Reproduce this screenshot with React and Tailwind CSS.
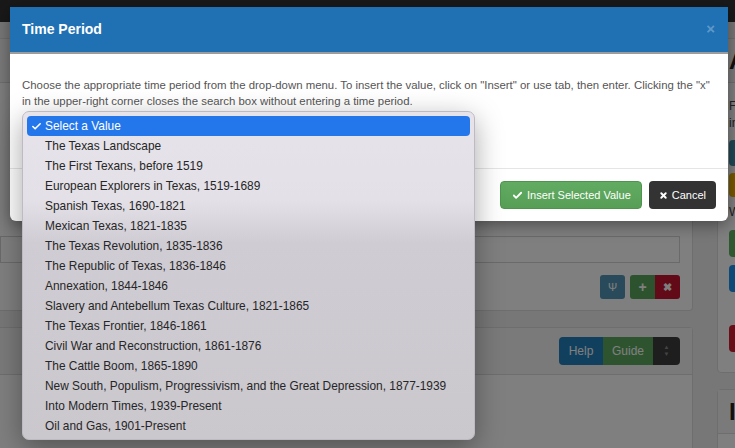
import { Check, X } from 'lucide-react'

const periods = [
  'Select a Value',
  'The Texas Landscape',
  'The First Texans, before 1519',
  'European Explorers in Texas, 1519-1689',
  'Spanish Texas, 1690-1821',
  'Mexican Texas, 1821-1835',
  'The Texas Revolution, 1835-1836',
  'The Republic of Texas, 1836-1846',
  'Annexation, 1844-1846',
  'Slavery and Antebellum Texas Culture, 1821-1865',
  'The Texas Frontier, 1846-1861',
  'Civil War and Reconstruction, 1861-1876',
  'The Cattle Boom, 1865-1890',
  'New South, Populism, Progressivism, and the Great Depression, 1877-1939',
  'Into Modern Times, 1939-Present',
  'Oil and Gas, 1901-Present',
]

const BackgroundPage = () => (
  <div className="h-full">
    <div className="h-[22px] bg-[#333]" />
    <div className="flex gap-[24px] pt-[16px]">
      {/* main column */}
      <div className="w-[693px] shrink-0 flex flex-col gap-[16px]">
        <div className="h-[273px] bg-white border border-l-0 border-[#ddd] rounded-r-[4px] flex flex-col">
          <div className="h-[44px] bg-[#f5f5f5] border-b border-[#ddd]" />
          <div className="flex-1 flex flex-col justify-end pr-[12px] pb-[11px]">
            <div className="h-[27px] border border-[#d4d4d4] bg-white" />
            <div className="mt-[12px] flex justify-end gap-[5px]">
              <div className="w-[25px] h-[24px] rounded-[3px] bg-[#5195b4] text-white text-[11px] flex items-center justify-center">
                Ψ
              </div>
              <div className="flex">
                <div className="w-[25px] h-[24px] rounded-l-[3px] bg-[#5aa65c] text-white text-[14px] font-bold flex items-center justify-center">
                  +
                </div>
                <div className="w-[25px] h-[24px] rounded-r-[3px] bg-[#c41530] text-white text-[11px] font-bold flex items-center justify-center">
                  ✖
                </div>
              </div>
            </div>
          </div>
        </div>
        <div className="h-[200px] bg-white border border-l-0 border-[#ddd] rounded-r-[4px]">
          <div className="h-[47px] bg-[#f5f5f5] border-b border-[#ddd] flex items-center justify-end pr-[12px]">
            <div className="flex h-[28px] text-white text-[12px]">
              <div className="w-[44px] rounded-l-[4px] bg-[#227ebc] flex items-center justify-center">Help</div>
              <div className="w-[50px] bg-[#5aa85e] flex items-center justify-center">Guide</div>
              <div className="w-[27px] rounded-r-[4px] bg-[#3c3c3c] flex flex-col items-center justify-center text-[#888] text-[6px] leading-[7px]">
                <span>▲</span>
                <span>▼</span>
              </div>
            </div>
          </div>
        </div>
      </div>

      {/* right column */}
      <div className="w-[300px] shrink-0 flex flex-col gap-[16px]">
        <div className="h-[335px] bg-white border border-[#ddd] rounded-[4px] flex flex-col">
          <div className="h-[44px] bg-[#f5f5f5] border-b border-[#ddd] px-[11px] flex items-center text-[24px] font-bold text-[#222]">
            Actions
          </div>
          <div className="px-[11px] pt-[15px] text-[12px] leading-[17px] text-[#444]">
            <div>For this record, choose an option</div>
            <div>in the list below.</div>
            <div className="mt-[8px] h-[26px] rounded-[4px] bg-[#3e92aa]" />
            <div className="mt-[7px] h-[24px] rounded-[4px] bg-[#efb200]" />
            <div className="mt-[7px]">Workflow</div>
            <div className="mt-[9px] h-[27px] rounded-[4px] bg-[#5eb060]" />
            <div className="mt-[8px] h-[27px] rounded-[4px] bg-[#1a90ec]" />
            <div className="mt-[33px] h-[27px] rounded-[4px] bg-[#d01c30]" />
          </div>
        </div>
        <div className="h-[120px] bg-white border border-[#ddd] rounded-[4px]">
          <div className="h-[44px] bg-[#f5f5f5] border-b border-[#ddd] px-[11px] flex items-center text-[24px] font-bold text-[#222]">
            Info
          </div>
        </div>
      </div>
    </div>
  </div>
)

const TimePeriodModal = () => (
  <div className="absolute left-[10px] top-[7px] w-[718px] bg-white rounded-b-[6px] overflow-hidden shadow-[0_4px_16px_rgba(0,0,0,0.4)]">
    <div className="h-[45px] bg-[#1f71b4] px-[12px] flex items-center justify-between">
      <h4 className="text-[14px] font-bold text-white">Time Period</h4>
      <span className="text-[15px] leading-none text-white/30 font-bold mr-[1px] -mt-[3px]">×</span>
    </div>
    <div className="h-[2px] bg-[#9c9c9c]" />
    <div className="h-[114px] pl-[12px] pr-[2px] pt-[23px] text-[11.4px] leading-[16px] text-[#555] whitespace-nowrap">
      Choose the appropriate time period from the drop-down menu. To insert the value, click on "Insert" or use tab, then
      enter. Clicking the "x"
      <br />
      in the upper-right corner closes the search box without entering a time period.
    </div>
    <div className="border-t border-[#e5e5e5] pt-[12px] pb-[12px] px-[12px] flex justify-end gap-[7px]">
      <button className="h-[28px] pl-[11px] pr-[10px] rounded-[4px] border border-[#4e944e] bg-[linear-gradient(to_bottom,#62ab62,#579f57)] text-white text-[11px] flex items-center gap-[4px]">
        <Check size={11} strokeWidth={4} />
        Insert Selected Value
      </button>
      <button className="h-[28px] px-[10px] rounded-[4px] bg-[#333] text-white text-[11px] flex items-center gap-[4px]">
        <X size={9} strokeWidth={5} />
        Cancel
      </button>
    </div>
  </div>
)

const SelectPopup = () => (
  <div className="absolute left-[22px] top-[111px] w-[453px] h-[329px] rounded-[7px] border border-[#bdbac1] bg-[linear-gradient(to_bottom,#e6e3ea_0%,#e3e0e7_27%,#cfccd3_40%,#cac7cd_100%)] px-[4px] pt-[4px] shadow-[0_8px_28px_rgba(0,0,0,0.35)]">
    {periods.map((p, i) => (
      <div
        key={p}
        className={
          i === 0
            ? 'relative h-[20px] rounded-[4px] bg-[#2477ea] text-white pl-[18px] pt-[1px] flex items-center text-[11.9px]'
            : 'relative h-[20px] pl-[18px] pt-[1px] flex items-center text-[11.9px] text-[#262626]'
        }
      >
        {i === 0 && <Check size={11} strokeWidth={3.5} className="absolute left-[4px] top-[5px]" />}
        {p}
      </div>
    ))}
  </div>
)

export default function App() {
  return (
    <div className="relative w-[735px] h-[448px] overflow-hidden bg-[#eee] font-['Liberation_Sans',Arial,sans-serif]">
      <BackgroundPage />
      <div className="absolute inset-0 bg-black/50" />
      <TimePeriodModal />
      <SelectPopup />
    </div>
  )
}
